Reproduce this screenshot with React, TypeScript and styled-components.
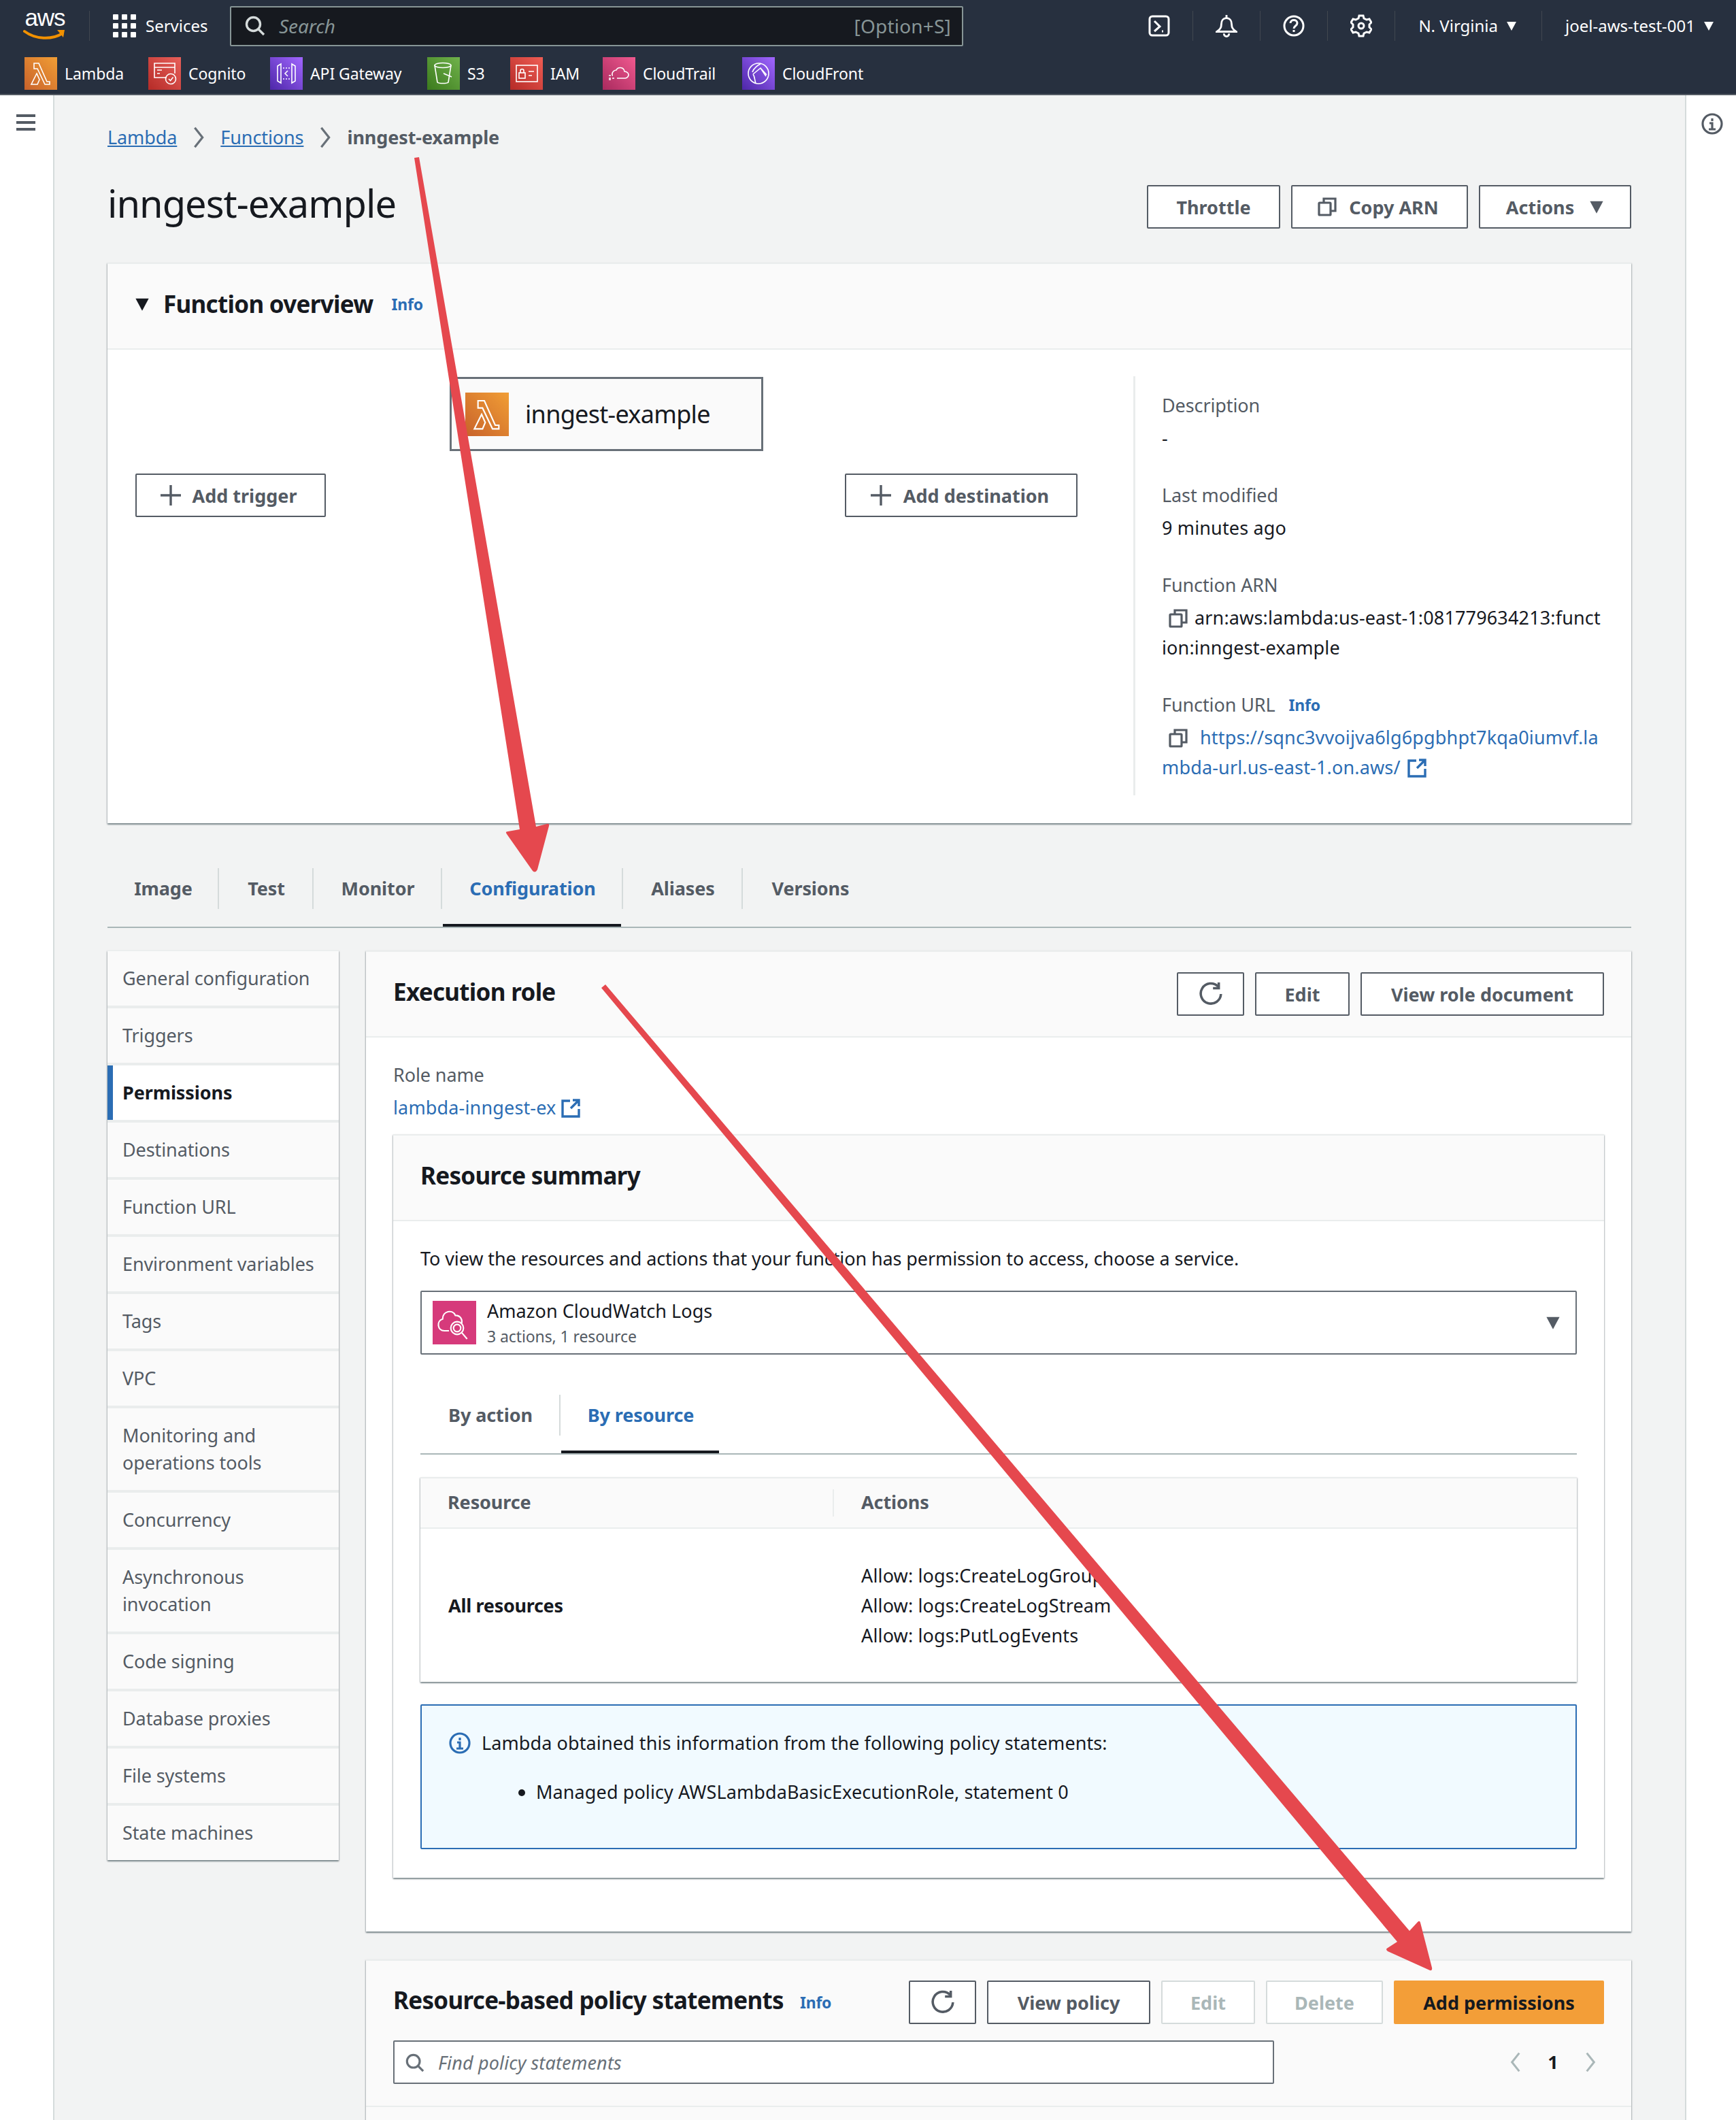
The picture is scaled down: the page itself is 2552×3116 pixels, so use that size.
import React from "react";
import styled, { createGlobalStyle } from "styled-components";

const Global = createGlobalStyle`
  html, body { margin: 0; padding: 0; background: #f2f3f3; }
  body { font-family: "Noto Sans", Roboto, sans-serif; color: #16191f; }
  * { box-sizing: border-box; }
`;

const LINK = "#2b6db4";
const TEXT = "#16191f";
const GRAY = "#545b64";
const FONT = `"Noto Sans", Roboto, sans-serif`;

const Page = styled.div`
  position: relative;
  width: 2552px;
  height: 3116px;
  overflow: hidden;
  display: flex;
  flex-direction: column;
  font-family: ${FONT};
  font-size: 26px;
  letter-spacing: -0.1px;
  line-height: 40px;
`;

/* ---------- top nav ---------- */
const TopNav = styled.header`
  background: #27303f;
  height: 140px;
  flex: none;
  border-bottom: 2px solid #545b64;
  color: #fff;
`;
const NavRow = styled.div`
  height: 76px;
  display: flex;
  align-items: center;
  padding-left: 34px;
  padding-right: 32px;
`;
const Logo = styled.div`
  width: 64px;
  height: 58px;
  position: relative;
  display: flex;
  flex-direction: column;
  align-items: center;
  flex: none;
`;
const LogoText = styled.span`
  font-family: "Liberation Sans", sans-serif;
  font-size: 35px;
  line-height: 34px;
  letter-spacing: -1px;
  color: #fff;
`;
const NavDivider = styled.span<{ $l?: number; $r?: number }>`
  width: 1px;
  height: 44px;
  background: #414750;
  flex: none;
  margin-left: ${(p) => p.$l ?? 0}px;
  margin-right: ${(p) => p.$r ?? 0}px;
`;
const NavText = styled.span`
  font-size: 24px;
  color: #fff;
  white-space: nowrap;
  letter-spacing: 0;
`;
const ServicesGroup = styled.div`
  display: flex;
  align-items: center;
  gap: 14px;
  width: 172px;
  flex: none;
`;
const SearchBox = styled.div`
  width: 1078px;
  height: 59px;
  background: #16191f;
  border: 2px solid #879596;
  border-radius: 2px;
  display: flex;
  align-items: center;
  padding: 0 16px 0 20px;
  flex: none;
`;
const SearchHint = styled.span`
  font-style: italic;
  font-size: 28px;
  color: #879596;
  margin-left: 20px;
  flex: 1;
`;
const Shortcut = styled.span`
  font-size: 28px;
  letter-spacing: 0.2px;
  color: #879596;
`;
const NavIcons = styled.div`
  display: flex;
  align-items: center;
  margin-left: auto;
`;
const NavIconBox = styled.span`
  width: 32px;
  height: 36px;
  display: flex;
  align-items: center;
  justify-content: center;
  flex: none;
`;
const NavMenu = styled.span<{ $ml: number }>`
  display: flex;
  align-items: center;
  gap: 12px;
  margin-left: ${(p) => p.$ml}px;
`;
const FavRow = styled.nav`
  height: 62px;
  display: flex;
  align-items: flex-start;
  padding: 8px 0 0 36px;
`;
const Fav = styled.div<{ $w: number }>`
  display: flex;
  align-items: center;
  gap: 11px;
  width: ${(p) => p.$w}px;
  flex: none;
  height: 48px;
`;
const FavText = styled.span`
  font-size: 23px;
  color: #fff;
  white-space: nowrap;
  letter-spacing: -0.1px;
`;

/* ---------- shell ---------- */
const Shell = styled.div`
  display: flex;
  flex: 1;
  min-height: 0;
`;
const Rail = styled.aside<{ $side: "l" | "r" }>`
  background: #fff;
  flex: none;
  width: ${(p) => (p.$side === "l" ? 80 : 75)}px;
  border-${(p) => (p.$side === "l" ? "right" : "left")}: 2px solid #d5dbdb;
  display: flex;
  flex-direction: column;
  align-items: center;
  padding-top: ${(p) => (p.$side === "l" ? 28 : 26)}px;
  padding-left: ${(p) => (p.$side === "l" ? 0 : 2)}px;
`;
const Content = styled.main`
  flex: 1;
  min-width: 0;
  padding: 42px 79px 0 78px;
`;
const Crumbs = styled.div`
  display: flex;
  align-items: center;
  height: 40px;
`;
const Crumb = styled.a`
  color: ${LINK};
  text-decoration: underline;
  font-size: 27px;
`;
const CrumbCurrent = styled.span`
  color: ${GRAY};
  font-weight: 700;
  font-size: 27px;
`;
const CrumbSep = styled.span`
  width: 64px;
  display: flex;
  justify-content: center;
`;
const HeadRow = styled.div`
  margin: 50px 0;
  display: flex;
  align-items: center;
  justify-content: space-between;
  height: 64px;
`;
const Title = styled.h1`
  margin: 0;
  padding-bottom: 12px;
  font-weight: 400;
  font-size: 56px;
  line-height: 64px;
  letter-spacing: -1px;
`;
const Btns = styled.div`
  display: flex;
  gap: 16px;
  align-items: center;
`;
const Btn = styled.button<{ $w: number; $v?: "dis" | "pri"; $gap?: number; $pr?: number }>`
  width: ${(p) => p.$w}px;
  height: 64px;
  flex: none;
  font-family: ${FONT};
  font-weight: 700;
  font-size: 27px;
  letter-spacing: 0;
  border-radius: 2px;
  background: ${(p) => (p.$v === "pri" ? "#f39e38" : "#fff")};
  color: ${(p) => (p.$v === "dis" ? "#aab7b8" : p.$v === "pri" ? TEXT : GRAY)};
  border: 2px solid ${(p) => (p.$v === "dis" ? "#d5dbdb" : p.$v === "pri" ? "#f39e38" : GRAY)};
  display: inline-flex;
  align-items: center;
  justify-content: center;
  gap: ${(p) => p.$gap ?? 14}px;
  padding: 0 ${(p) => p.$pr ?? 0}px 0 0;
`;

/* ---------- cards ---------- */
const Card = styled.section`
  background: #fff;
  border-top: 2px solid #eaeded;
  box-shadow: 0 2px 2px rgba(0, 28, 36, 0.4), 1px 1px 2px rgba(0, 28, 36, 0.15), -1px 1px 2px rgba(0, 28, 36, 0.15);
`;
const CardHead = styled.div<{ $h: number }>`
  height: ${(p) => p.$h}px;
  background: #fafafa;
  border-bottom: 2px solid #eaeded;
  display: flex;
  align-items: center;
`;
const OverviewHead = styled(CardHead)`
  padding: 0 0 6px 40px;
  gap: 20px;
`;
const H2 = styled.h2`
  margin: 0;
  font-size: 35px;
  line-height: 48px;
  font-weight: 700;
  letter-spacing: -0.7px;
`;
const PanelTitle = styled(H2)`
  padding-bottom: 6px;
`;
const InfoLink = styled.a<{ $ml?: number }>`
  color: ${LINK};
  font-size: 23px;
  font-weight: 700;
  margin-left: ${(p) => p.$ml ?? 0}px;
  letter-spacing: -0.2px;
`;
const OverviewBody = styled.div`
  display: flex;
  height: 696px;
`;
const Diagram = styled.div`
  width: 1508px;
  flex: none;
  padding: 40px 82px 0 41px;
  display: flex;
  flex-direction: column;
`;
const Node = styled.div`
  align-self: center;
  width: 461px;
  height: 109px;
  background: #fafafa;
  border: 3px solid #687078;
  display: flex;
  align-items: center;
  padding-left: 20px;
  gap: 24px;
  font-size: 36px;
  letter-spacing: -0.7px;
  color: ${TEXT};
`;
const DiagramBtns = styled.div`
  margin-top: 33px;
  display: flex;
  justify-content: space-between;
`;
const Details = styled.div`
  margin-top: 39px;
  height: 616px;
  flex: none;
  width: 690px;
  border-left: 3px solid #eaeded;
  padding: 21px 0 0 39px;
  display: flex;
  flex-direction: column;
  gap: 40px;
  line-height: 44px;
`;
const Field = styled.div`
  display: flex;
  flex-direction: column;
  gap: 4px;
`;
const Label = styled.div`
  color: ${GRAY};
  font-size: 27px;
  line-height: 44px;
  display: flex;
  align-items: center;
  gap: 20px;
`;
const Value = styled.div<{ $link?: boolean }>`
  font-size: 27px;
  line-height: 44px;
  letter-spacing: 0.15px;
  color: ${(p) => (p.$link ? LINK : TEXT)};
  white-space: nowrap;
`;
const InlineIcon = styled.span<{ $l?: number; $r?: number }>`
  display: inline-block;
  vertical-align: -5px;
  margin-left: ${(p) => p.$l ?? 0}px;
  margin-right: ${(p) => p.$r ?? 0}px;
  line-height: 0;
`;

/* ---------- tabs ---------- */
const TabStrip = styled.div<{ $pb: number; $mt: number }>`
  margin-top: ${(p) => p.$mt}px;
  border-bottom: 2px solid #aab7b8;
  display: flex;
  align-items: flex-start;
  height: ${(p) => 60 + p.$pb + 2}px;
`;
const Tab = styled.div<{ $w: number; $on?: boolean; $pb: number; $last?: boolean }>`
  position: relative;
  width: ${(p) => p.$w}px;
  height: 60px;
  flex: none;
  padding-left: 2px;
  font-weight: 700;
  font-size: 27px;
  line-height: 60px;
  text-align: center;
  color: ${(p) => (p.$on ? LINK : GRAY)};
  border-right: ${(p) => (p.$last ? "none" : "2px solid #d5dbdb")};
  ${(p) =>
    p.$on
      ? `&::after { content: ""; position: absolute; left: 1px; right: 1px; top: ${60 + p.$pb - 4}px; height: 4px; background: ${TEXT}; }`
      : ""}
`;

/* ---------- config ---------- */
const ConfigGrid = styled.div`
  margin-top: 33px;
  display: grid;
  grid-template-columns: 340px 1fr;
  column-gap: 40px;
  align-items: start;
`;
const SideNav = styled.nav`
  background: #eaeded;
  display: flex;
  flex-direction: column;
  gap: 4px;
  padding-top: 1px;
  box-shadow: 0 2px 2px rgba(0, 28, 36, 0.4), 1px 1px 2px rgba(0, 28, 36, 0.15), -1px 1px 2px rgba(0, 28, 36, 0.15);
`;
const SideItem = styled.a<{ $on?: boolean }>`
  display: flex;
  align-items: center;
  min-height: 80px;
  padding: 0 10px 0 22px;
  font-size: 27px;
  line-height: 40px;
  background: ${(p) => (p.$on ? "#fff" : "#fafafa")};
  color: ${(p) => (p.$on ? TEXT : GRAY)};
  font-weight: ${(p) => (p.$on ? 700 : 400)};
  border-left: ${(p) => (p.$on ? `8px solid ${LINK}` : "none")};
  padding-left: ${(p) => (p.$on ? 14 : 22)}px;
  &[data-two] { min-height: 120px; padding-right: 40px; }
`;
const Stack = styled.div`
  display: flex;
  flex-direction: column;
  gap: 41px;
  min-width: 0;
`;
const PanelHead = styled(CardHead)`
  padding: 0 40px;
  justify-content: space-between;
`;
const PanelBody = styled.div`
  padding: 35px 40px 79px;
`;
const RoleLabel = styled.div`
  color: ${GRAY};
  font-size: 27px;
`;
const RoleLink = styled.a`
  display: block;
  height: 40px;
  margin-top: 8px;
  color: ${LINK};
  font-size: 27px;
  letter-spacing: 0.15px;
`;
const InnerCard = styled(Card)`
  margin-top: 19px;
`;
const InnerBody = styled.div`
  padding: 35px 40px 42px;
`;
const Lead = styled.div`
  font-size: 27px;
  color: ${TEXT};
  white-space: nowrap;
`;
const SelectBox = styled.div`
  margin-top: 27px;
  height: 94px;
  border: 2px solid #687078;
  border-radius: 2px;
  display: flex;
  align-items: center;
  padding: 0 22px 0 16px;
  gap: 16px;
`;
const SelectText = styled.div`
  flex: 1;
  display: flex;
  flex-direction: column;
  padding-top: 2px;
`;
const SelectMain = styled.span`
  font-size: 27px;
  line-height: 38px;
  letter-spacing: 0.05px;
`;
const SelectSub = styled.span`
  font-size: 23px;
  line-height: 36px;
  color: ${GRAY};
`;
const ResTable = styled(Card)`
  margin-top: 33px;
`;
const ResHead = styled.div`
  height: 74px;
  background: #fafafa;
  border-bottom: 2px solid #eaeded;
  display: grid;
  grid-template-columns: 606px 1fr;
  align-items: center;
  color: ${GRAY};
  font-weight: 700;
  font-size: 27px;
`;
const HeadCell = styled.div<{ $div?: boolean }>`
  height: 40px;
  line-height: 38px;
  padding-left: ${(p) => (p.$div ? 40 : 40)}px;
  ${(p) => (p.$div ? "border-left: 2px solid #eaeded;" : "")}
`;
const ResRow = styled.div`
  height: 225px;
  display: grid;
  grid-template-columns: 606px 1fr;
  align-items: center;
  font-size: 27px;
`;
const ResName = styled.div`
  padding-left: 41px;
  font-weight: 700;
  letter-spacing: -0.3px;
`;
const ResActions = styled.div`
  padding-left: 42px;
  line-height: 44px;
  letter-spacing: 0.15px;
  display: flex;
  flex-direction: column;
`;
const Alert = styled.div`
  margin-top: 33px;
  height: 213px;
  background: #f1faff;
  border: 2px solid ${LINK};
  border-radius: 2px;
  padding: 35px 40px 0;
  font-size: 27px;
  letter-spacing: 0.1px;
`;
const AlertLine = styled.div`
  display: flex;
  align-items: center;
  gap: 16px;
  height: 40px;
`;
const AlertList = styled.ul`
  margin: 32px 0 0;
  padding: 0 0 0 128px;
  line-height: 40px;
`;
const PolicyHead = styled.div`
  background: #fafafa;
  padding: 29px 40px 32px;
  border-bottom: 2px solid #eaeded;
`;
const PolicyRow = styled.div`
  display: flex;
  align-items: center;
  justify-content: space-between;
`;
const PolicyTitle = styled.div`
  display: flex;
  align-items: center;
`;
const FilterRow = styled(PolicyRow)`
  margin-top: 24px;
`;
const Filter = styled.div`
  width: 1295px;
  height: 64px;
  background: #fff;
  border: 2px solid #687078;
  border-radius: 2px;
  display: flex;
  align-items: center;
  padding: 2px 0 0 16px;
  gap: 20px;
  font-style: italic;
  color: #687078;
  font-size: 27px;
  letter-spacing: 0.15px;
`;
const Pager = styled.div`
  width: 130px;
  margin-right: 10px;
  display: flex;
  align-items: center;
  justify-content: space-between;
  font-weight: 700;
  font-size: 27px;
`;
const PolicyFill = styled.div`
  background: #fafafa;
  height: 400px;
`;
const Overlay = styled.svg`
  position: absolute;
  left: 0;
  top: 0;
  pointer-events: none;
`;
const Bars = styled.div`
  width: 28px;
  display: flex;
  flex-direction: column;
  gap: 6px;
  margin-right: 2px;
`;
const Bar = styled.span`
  height: 4px;
  background: ${GRAY};
`;

/* ---------- icons ---------- */
const Grid9 = () => (
  <svg width="34" height="34" viewBox="0 0 34 34" fill="#fff">
    {[0, 13, 26].flatMap((x) => [0, 13, 26].map((y) => <rect key={`${x}${y}`} x={x} y={y} width="8" height="8" rx="1" />))}
  </svg>
);
const SearchIcon = ({ c = "#d5dbdb", s = 30 }: { c?: string; s?: number }) => (
  <svg width={s} height={s} viewBox="0 0 30 30" fill="none" stroke={c} strokeWidth="3.4">
    <circle cx="12.5" cy="12.5" r="10" />
    <path d="M20 20l8 8" />
  </svg>
);
const Caret = ({ s = 16, c = "#fff" }: { s?: number; c?: string }) => (
  <svg width={s} height={s} viewBox="0 0 16 16">
    <path d="M1 2h14l-7 13z" fill={c} />
  </svg>
);
const Copy = ({ c = GRAY, s = 28 }: { c?: string; s?: number }) => (
  <svg width={s} height={s} viewBox="0 0 28 28" fill="none" stroke={c} strokeWidth="3.2">
    <rect x="2" y="8" width="17" height="18" rx="1" />
    <path d="M9 8V2h17v18h-7" />
  </svg>
);
const Ext = ({ s = 28 }: { s?: number }) => (
  <svg width={s} height={s} viewBox="0 0 28 28" fill="none" stroke={LINK} strokeWidth="3.4">
    <path d="M13 3H2v23h24V15" />
    <path d="M14 14L26 2M17 2h9v9" />
  </svg>
);
const Plus = () => (
  <svg width="30" height="30" viewBox="0 0 30 30" stroke={GRAY} strokeWidth="3.4">
    <path d="M15 0v30M0 15h30" />
  </svg>
);
const Refresh = () => (
  <svg width="36" height="36" viewBox="0 0 34 34" fill="none" stroke={GRAY} strokeWidth="3.4">
    <path d="M27 6.5A14 14 0 1 0 31 17" />
    <path d="M28 1v8h-8" />
  </svg>
);
const Info = ({ c = GRAY }: { c?: string }) => (
  <svg width="32" height="32" viewBox="0 0 32 32" fill="none" stroke={c} strokeWidth="3.2">
    <circle cx="16" cy="16" r="14" />
    <path d="M16 8v4M12 15h4v9M11 24h10" />
  </svg>
);
const Chevron = ({ dir, c = GRAY, h = 36 }: { dir: "l" | "r"; c?: string; h?: number }) => (
  <svg width="20" height={h} viewBox="0 0 18 36" fill="none" stroke={c} strokeWidth="3.4">
    <path d={dir === "r" ? "M3 3l12 15L3 33" : "M15 3L3 18l12 15"} />
  </svg>
);
const Svc = ({ id, from, to, size = 48, children }: { id: string; from: string; to: string; size?: number; children?: React.ReactNode }) => (
  <svg width={size} height={size} viewBox="0 0 48 48" style={{ flex: "none" }}>
    <defs>
      <linearGradient id={id} x1="0" y1="1" x2="1" y2="0">
        <stop offset="0" stopColor={from} />
        <stop offset="1" stopColor={to} />
      </linearGradient>
    </defs>
    <rect width="48" height="48" fill={`url(#${id})`} />
    <g fill="none" stroke="#fff" strokeWidth="1.6">{children}</g>
  </svg>
);
const LambdaGlyph = () => <path d="M14 9h7l12 27h4v4h-7L19 17h-5zM18 24l4 9-3 7h-9z" strokeLinejoin="miter" />;
const CognitoGlyph = () => (
  <>
    <path d="M39 24V9H9v21h18" />
    <path d="M9 15h30M13 19h7M13 24h4" />
    <circle cx="33" cy="32" r="7.5" />
    <path d="M30 32l2.5 2.5 4-5" />
  </>
);
const ApiGlyph = () => (
  <>
    <path d="M11 13l5-3v28l-5-3zM37 13l-5-3v28l5-3z" />
    <path d="M19 16h10M19 32h10" strokeDasharray="2 2" />
    <path d="M26 20l-4 4 4 4" />
  </>
);
const S3Glyph = () => (
  <>
    <ellipse cx="23" cy="12" rx="12" ry="3.5" />
    <path d="M11 12l4 25c2 2 14 2 16 0l4-25" />
    <path d="M24 24l12 5" />
  </>
);
const IamGlyph = () => (
  <>
    <rect x="9" y="12" width="31" height="24" />
    <rect x="13" y="23" width="9" height="8" />
    <path d="M15 23v-3a2.5 2.5 0 0 1 5 0v3M27 21h8M27 27h5" />
  </>
);
const TrailGlyph = () => (
  <>
    <path d="M14 27c-1-7 5-8 6-8 2-5 11-5 12 2 4 0 6 3 6 5s-2 5-5 5H21" />
    <path d="M9 31h9M9 27h6M9 33h3" strokeDasharray="3 2" />
  </>
);
const FrontGlyph = () => (
  <>
    <circle cx="24" cy="24" r="15" />
    <path d="M15 22c2-6 9-11 12-12M16 25c3 4 2 9 4 13M16 25l11-9 9 10M27 16l8 12" />
  </>
);
const CloudWatchGlyph = () => (
  <>
    <path d="M18 33h-5c-8 0-9-11-2-13 0-9 11-11 14-4 6 0 8 5 7 9" />
    <circle cx="27" cy="30" r="7" />
    <circle cx="27" cy="30" r="4" />
    <path d="M32 35l6 7" />
  </>
);
const Shell2 = () => (
  <svg width="32" height="32" viewBox="0 0 32 32" fill="none" stroke="#fff" strokeWidth="3">
    <rect x="2" y="2" width="28" height="28" rx="4" />
    <path d="M9 9l8 8-8 7M20 24h2" />
  </svg>
);
const Bell = () => (
  <svg width="34" height="36" viewBox="0 0 34 36" fill="none" stroke="#fff" strokeWidth="3">
    <path d="M2 27c4-3 7-5 7-12 0-5 3-9 8-9s8 4 8 9c0 7 3 9 7 12z" />
    <path d="M17 1v5M13 30c0 6 8 6 8 0" />
  </svg>
);
const Help = () => (
  <svg width="32" height="32" viewBox="0 0 32 32" fill="none" stroke="#fff" strokeWidth="3">
    <circle cx="16" cy="16" r="14" />
    <path d="M11 12c0-6 10-6 10 0 0 4-5 4-5 8M16 22v3" />
  </svg>
);
const Gear = () => (
  <svg width="32" height="34" viewBox="0 0 32 34" fill="none" stroke="#fff" strokeWidth="3">
    <path d="M13 2h6l1 4 4 2 4-1 3 5-3 3v4l3 3-3 5-4-1-4 2-1 4h-6l-1-4-4-2-4 1-3-5 3-3v-4L1 12l3-5 4 1 4-2z" />
    <circle cx="16" cy="17" r="4" />
  </svg>
);

const sideItems = [
  "General configuration", "Triggers", "Permissions", "Destinations", "Function URL",
  "Environment variables", "Tags", "VPC", "Monitoring and operations tools", "Concurrency",
  "Asynchronous invocation", "Code signing", "Database proxies", "File systems", "State machines",
];

export default function App() {
  return (
    <Page>
      <Global />
      <TopNav>
        <NavRow>
          <Logo>
            <LogoText>aws</LogoText>
            <svg width="64" height="18" viewBox="0 0 64 18" fill="none">
              <path d="M2 3c16 12 40 13 56 3" stroke="#f29100" strokeWidth="4" strokeLinecap="round" />
              <path d="M50 1h11l-2 11z" fill="#f29100" />
            </svg>
          </Logo>
          <NavDivider $l={33} $r={34} />
          <ServicesGroup>
            <Grid9 />
            <NavText>Services</NavText>
          </ServicesGroup>
          <SearchBox>
            <SearchIcon />
            <SearchHint>Search</SearchHint>
            <Shortcut>[Option+S]</Shortcut>
          </SearchBox>
          <NavIcons>
            <NavIconBox><Shell2 /></NavIconBox>
            <NavDivider $l={33} $r={33} />
            <NavIconBox><Bell /></NavIconBox>
            <NavDivider $l={33} $r={33} />
            <NavIconBox><Help /></NavIconBox>
            <NavDivider $l={33} $r={33} />
            <NavIconBox><Gear /></NavIconBox>
            <NavDivider $l={33} $r={0} />
            <NavMenu $ml={34}>
              <NavText>N. Virginia</NavText>
              <Caret />
            </NavMenu>
            <NavDivider $l={36} $r={0} />
            <NavMenu $ml={34}>
              <NavText>joel-aws-test-001</NavText>
              <Caret />
            </NavMenu>
          </NavIcons>
        </NavRow>
        <FavRow>
          <Fav $w={182}><Svc id="f1" from="#c8622b" to="#f19e35"><LambdaGlyph /></Svc><FavText>Lambda</FavText></Fav>
          <Fav $w={179}><Svc id="f2" from="#b52b27" to="#e8605a"><CognitoGlyph /></Svc><FavText>Cognito</FavText></Fav>
          <Fav $w={231}><Svc id="f3" from="#4d27a8" to="#a166ff"><ApiGlyph /></Svc><FavText>API Gateway</FavText></Fav>
          <Fav $w={122}><Svc id="f4" from="#3b7a1d" to="#70b24b"><S3Glyph /></Svc><FavText>S3</FavText></Fav>
          <Fav $w={136}><Svc id="f5" from="#b52b27" to="#ef5d54"><IamGlyph /></Svc><FavText>IAM</FavText></Fav>
          <Fav $w={205}><Svc id="f6" from="#a92a5e" to="#f0598f"><TrailGlyph /></Svc><FavText>CloudTrail</FavText></Fav>
          <Fav $w={200}><Svc id="f7" from="#4d27a8" to="#a166ff"><FrontGlyph /></Svc><FavText>CloudFront</FavText></Fav>
        </FavRow>
      </TopNav>

      <Shell>
        <Rail $side="l">
          <Bars><Bar /><Bar /><Bar /></Bars>
        </Rail>
        <Content>
          <Crumbs>
            <Crumb>Lambda</Crumb>
            <CrumbSep><Chevron dir="r" c="#687078" h={34} /></CrumbSep>
            <Crumb>Functions</Crumb>
            <CrumbSep><Chevron dir="r" c="#687078" h={34} /></CrumbSep>
            <CrumbCurrent>inngest-example</CrumbCurrent>
          </Crumbs>
          <HeadRow>
            <Title>inngest-example</Title>
            <Btns>
              <Btn $w={196}>Throttle</Btn>
              <Btn $w={260} $gap={18} $pr={4}><Copy />Copy ARN</Btn>
              <Btn $w={224}>Actions<InlineIcon $l={8}><Caret s={22} c={GRAY} /></InlineIcon></Btn>
            </Btns>
          </HeadRow>

          <Card>
            <OverviewHead $h={126}>
              <Caret s={22} c={TEXT} />
              <H2>Function overview</H2>
              <InfoLink $ml={7}>Info</InfoLink>
            </OverviewHead>
            <OverviewBody>
              <Diagram>
                <Node>
                  <Svc id="n1" from="#c8622b" to="#f19e35" size={64}><LambdaGlyph /></Svc>
                  inngest-example
                </Node>
                <DiagramBtns>
                  <Btn $w={280} $gap={16} $pr={5}><Plus />Add trigger</Btn>
                  <Btn $w={342} $gap={18} $pr={4}><Plus />Add destination</Btn>
                </DiagramBtns>
              </Diagram>
              <Details>
                <Field>
                  <Label>Description</Label>
                  <Value>-</Value>
                </Field>
                <Field>
                  <Label>Last modified</Label>
                  <Value>9 minutes ago</Value>
                </Field>
                <Field>
                  <Label>Function ARN</Label>
                  <Value>
                    <InlineIcon $l={10} $r={10}><Copy /></InlineIcon>
                    arn:aws:lambda:us-east-1:081779634213:funct<br />ion:inngest-example
                  </Value>
                </Field>
                <Field>
                  <Label>Function URL<InfoLink>Info</InfoLink></Label>
                  <Value $link>
                    <InlineIcon $l={10} $r={18}><Copy /></InlineIcon>
                    https://sqnc3vvoijva6lg6pgbhpt7kqa0iumvf.la<br />mbda-url.us-east-1.on.aws/
                    <InlineIcon $l={10}><Ext /></InlineIcon>
                  </Value>
                </Field>
              </Details>
            </OverviewBody>
          </Card>

          <TabStrip $mt={66} $pb={26}>
            <Tab $w={164} $pb={26}>Image</Tab>
            <Tab $w={139} $pb={26}>Test</Tab>
            <Tab $w={189} $pb={26}>Monitor</Tab>
            <Tab $w={266} $pb={26} $on>Configuration</Tab>
            <Tab $w={176} $pb={26}>Aliases</Tab>
            <Tab $w={197} $pb={26} $last>Versions</Tab>
          </TabStrip>

          <ConfigGrid>
            <SideNav>
              {sideItems.map((s) => (
                <SideItem key={s} $on={s === "Permissions"} data-two={s.length > 22 ? "" : undefined}>
                  {s}
                </SideItem>
              ))}
            </SideNav>
            <Stack>
              <Card>
                <PanelHead $h={126}>
                  <PanelTitle>Execution role</PanelTitle>
                  <Btns>
                    <Btn $w={99}><Refresh /></Btn>
                    <Btn $w={139}>Edit</Btn>
                    <Btn $w={358}>View role document</Btn>
                  </Btns>
                </PanelHead>
                <PanelBody>
                  <RoleLabel>Role name</RoleLabel>
                  <RoleLink>
                    lambda-inngest-ex
                    <InlineIcon $l={8}><Ext /></InlineIcon>
                  </RoleLink>
                  <InnerCard>
                    <PanelHead $h={126}>
                      <PanelTitle>Resource summary</PanelTitle>
                    </PanelHead>
                    <InnerBody>
                      <Lead>To view the resources and actions that your function has permission to access, choose a service.</Lead>
                      <SelectBox>
                        <Svc id="cw" from="#d63a7b" to="#d63a7b" size={64}><CloudWatchGlyph /></Svc>
                        <SelectText>
                          <SelectMain>Amazon CloudWatch Logs</SelectMain>
                          <SelectSub>3 actions, 1 resource</SelectSub>
                        </SelectText>
                        <Caret s={22} c={GRAY} />
                      </SelectBox>
                      <TabStrip $mt={59} $pb={26}>
                        <Tab $w={206} $pb={26}>By action</Tab>
                        <Tab $w={234} $pb={26} $on $last>By resource</Tab>
                      </TabStrip>
                      <ResTable>
                        <ResHead>
                          <HeadCell>Resource</HeadCell>
                          <HeadCell $div>Actions</HeadCell>
                        </ResHead>
                        <ResRow>
                          <ResName>All resources</ResName>
                          <ResActions>
                            <span>Allow: logs:CreateLogGroup</span>
                            <span>Allow: logs:CreateLogStream</span>
                            <span>Allow: logs:PutLogEvents</span>
                          </ResActions>
                        </ResRow>
                      </ResTable>
                      <Alert>
                        <AlertLine>
                          <Info c={LINK} />
                          Lambda obtained this information from the following policy statements:
                        </AlertLine>
                        <AlertList>
                          <li>Managed policy AWSLambdaBasicExecutionRole, statement 0</li>
                        </AlertList>
                      </Alert>
                    </InnerBody>
                  </InnerCard>
                </PanelBody>
              </Card>
              <Card>
                <PolicyHead>
                  <PolicyRow>
                    <PolicyTitle>
                      <PanelTitle>Resource-based policy statements</PanelTitle>
                      <InfoLink $ml={24}>Info</InfoLink>
                    </PolicyTitle>
                    <Btns>
                      <Btn $w={99}><Refresh /></Btn>
                      <Btn $w={240}>View policy</Btn>
                      <Btn $w={138} $v="dis">Edit</Btn>
                      <Btn $w={172} $v="dis">Delete</Btn>
                      <Btn $w={309} $v="pri">Add permissions</Btn>
                    </Btns>
                  </PolicyRow>
                  <FilterRow>
                    <Filter>
                      <SearchIcon c="#687078" s={28} />
                      Find policy statements
                    </Filter>
                    <Pager>
                      <Chevron dir="l" c="#aab7b8" h={32} />
                      1
                      <Chevron dir="r" c="#aab7b8" h={32} />
                    </Pager>
                  </FilterRow>
                </PolicyHead>
                <PolicyFill />
              </Card>
            </Stack>
          </ConfigGrid>
        </Content>
        <Rail $side="r">
          <Info />
        </Rail>
      </Shell>

      <Overlay width="2552" height="3116" viewBox="0 0 2552 3116">
        <path
          d="M609 232L616 231L788 1215L804 1211Q808 1210 807 1214L790 1278Q787 1284 783 1280L745 1226Q742 1222 747 1222L764 1219Z"
          fill="#e5484e"
        />
        <path
          d="M884 1452L890 1447L2072 2838L2084 2825Q2087 2822 2088 2826L2105 2892Q2106 2897 2102 2896L2040 2868Q2036 2865 2040 2863L2054 2854Z"
          fill="#e5484e"
        />
      </Overlay>
    </Page>
  );
}
